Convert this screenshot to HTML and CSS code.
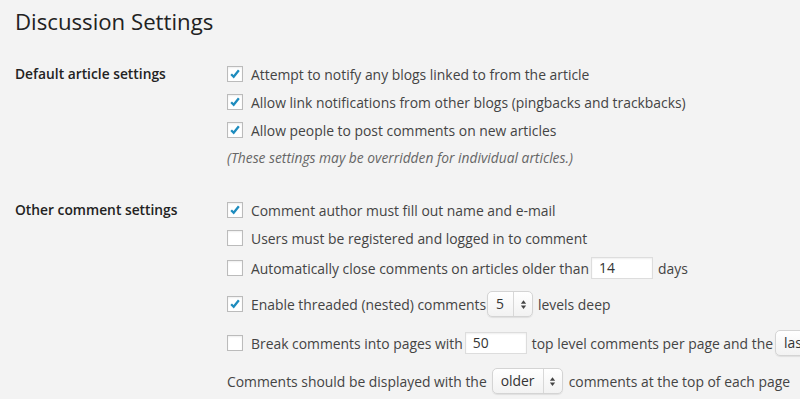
FILE: index.html
```html
<!doctype html>
<html>
  <head>
    <meta charset="UTF-8" />
    <meta name="viewport" content="width=device-width, initial-scale=1.0" />
    <title>Discussion Settings</title>
    <link rel="stylesheet" href="styles.css">
  </head>
  <body>
    <div class="wrap">
      <h1>Discussion Settings</h1>

      <div class="setting">
        <div class="setting-label">Default article settings</div>
        <div class="setting-fields">
          <label class="opt">
            <span class="check on"><svg viewBox="0 0 16 16"><path d="M3.6 8.2l2.9 3 5.9-7.4"/></svg></span>
            Attempt to notify any blogs linked to from the article
          </label>
          <label class="opt">
            <span class="check on"><svg viewBox="0 0 16 16"><path d="M3.6 8.2l2.9 3 5.9-7.4"/></svg></span>
            Allow link notifications from other blogs (pingbacks and trackbacks)
          </label>
          <label class="opt">
            <span class="check on"><svg viewBox="0 0 16 16"><path d="M3.6 8.2l2.9 3 5.9-7.4"/></svg></span>
            Allow people to post comments on new articles
          </label>
          <p class="note">(These settings may be overridden for individual articles.)</p>
        </div>
      </div>

      <div class="setting">
        <div class="setting-label">Other comment settings</div>
        <div class="setting-fields">
          <label class="opt">
            <span class="check on"><svg viewBox="0 0 16 16"><path d="M3.6 8.2l2.9 3 5.9-7.4"/></svg></span>
            Comment author must fill out name and e-mail
          </label>
          <label class="opt">
            <span class="check"></span>
            Users must be registered and logged in to comment
          </label>
          <label class="opt opt-input">
            <span class="check"></span>
            Automatically close comments on articles older than
            <span class="text-input">14</span>
            days
          </label>
          <label class="opt opt-select">
            <span class="check on"><svg viewBox="0 0 16 16"><path d="M3.6 8.2l2.9 3 5.9-7.4"/></svg></span>
            Enable threaded (nested) comments
            <span class="select select-small">
              <span class="select-value">5</span>
              <span class="select-arrows"><svg viewBox="0 0 8 12"><path d="M4 1L7 5H1z"/><path d="M4 11L1 7h6z"/></svg></span>
            </span>
            levels deep
          </label>
          <label class="opt opt-wide">
            <span class="check"></span>
            Break comments into pages with
            <span class="text-input">50</span>
            top level comments per page and the
            <span class="select select-last">
              <span class="select-value">last</span>
              <span class="select-arrows"><svg viewBox="0 0 8 12"><path d="M4 1L7 5H1z"/><path d="M4 11L1 7h6z"/></svg></span>
            </span>
          </label>
          <div class="opt opt-wide">
            Comments should be displayed with the
            <span class="select select-order">
              <span class="select-value">older</span>
              <span class="select-arrows"><svg viewBox="0 0 8 12"><path d="M4 1L7 5H1z"/><path d="M4 11L1 7h6z"/></svg></span>
            </span>
            comments at the top of each page
          </div>
        </div>
      </div>
    </div>
  </body>
</html>
```

FILE: styles.css
```css
body {
  font-family: "Open Sans", "Liberation Sans", sans-serif;
  margin: 0;
  background: #f3f3f3;
  color: #444;
  font-size: 13.9px;
  overflow: hidden;
}

.wrap {
  padding: 0 0 0 15px;
  width: 1100px;
}

h1 {
  font-size: 22.2px;
  font-weight: 400;
  line-height: 29px;
  color: #222;
  margin: 0;
  padding: 7px 0 0;
  height: 53px;
}

.setting {
  display: grid;
  grid-template-columns: 212px 1fr;
  margin-bottom: 24px;
}

.setting-label {
  font-size: 13.8px;
  font-weight: 600;
  color: #222;
  line-height: 28px;
}

.setting-fields {
  display: flex;
  flex-direction: column;
}

.opt {
  display: flex;
  align-items: center;
  gap: 4px;
  height: 28px;
  white-space: nowrap;
}

.opt-input {
  height: 32px;
}

.opt-select {
  height: 40px;
}

.opt-wide {
  height: 38px;
}

.check {
  width: 14px;
  height: 14px;
  border: 1px solid #bbb;
  background: #fff;
  box-shadow: inset 0 1px 2px rgba(0, 0, 0, 0.07);
  margin-right: 4px;
  flex: none;
}

.check svg {
  display: block;
  width: 14px;
  height: 14px;
  fill: none;
  stroke: #1e8cbe;
  stroke-width: 2.6;
}

.note {
  margin: 0;
  line-height: 28px;
  font-size: 13.8px;
  font-style: italic;
  color: #666;
}

.text-input {
  display: inline-block;
  box-sizing: border-box;
  width: 62px;
  height: 22px;
  line-height: 20px;
  padding: 0 7px;
  margin: 0 1px 0 -2px;
  border: 1px solid #ddd;
  background: #fff;
  box-shadow: inset 0 1px 2px rgba(0, 0, 0, 0.07);
  color: #333;
}

.select {
  display: inline-flex;
  box-sizing: border-box;
  height: 26px;
  border: 1px solid #d4d4d4;
  border-radius: 5px;
  background: linear-gradient(#fff, #f2f2f2);
  box-shadow: 0 1px 1px rgba(0, 0, 0, 0.08);
  color: #333;
  line-height: 24px;
  margin: 0 1px 0 -2px;
}

.select-value {
  padding: 0 0 0 8px;
  flex: 1;
  border-right: 1px solid #d8d8d8;
}

.select-arrows {
  width: 18px;
  display: flex;
  align-items: center;
  justify-content: center;
}

.select-arrows svg {
  width: 7px;
  height: 11px;
  fill: #444;
}

.select-small {
  width: 46px;
  margin-left: -3px;
}

.select-order {
  width: 71px;
  margin: 0 2px 0 1px;
}

.select-last {
  width: 60px;
}
```
